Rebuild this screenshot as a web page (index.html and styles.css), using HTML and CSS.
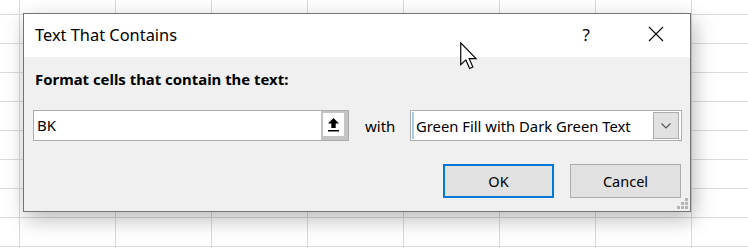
FILE: index.html
```html
<!DOCTYPE html>
<html lang="en">
<head>
  <meta charset="UTF-8">
  <title>Text That Contains</title>
  <link rel="stylesheet" href="styles.css">
</head>
<body>

  <div class="dialog">
    <div class="titlebar">
      <span class="title">Text That Contains</span>
      <span class="help">?</span>
      <svg class="close" width="16" height="16" viewBox="0 0 16 16">
        <path d="M1 1L15 15M15 1L1 15" stroke="#000" stroke-width="1.1" fill="none"/>
      </svg>
    </div>

    <div class="content">
      <div class="label">Format cells that contain the text:</div>

      <div class="row">
        <div class="textbox">
          <span class="value">BK</span>
          <span class="picker">
            <svg width="13" height="15" viewBox="0 0 13 15">
              <path d="M6.5 1L12 6.5H8.7V11H4.3V6.5H1Z" fill="#000"/>
              <rect x="1" y="13" width="11" height="1.5" fill="#000"/>
            </svg>
          </span>
        </div>
        <span class="with">with</span>
        <div class="combo">
          <span class="caret"></span>
          <span class="value">Green Fill with Dark Green Text</span>
          <span class="drop">
            <svg width="12" height="8" viewBox="0 0 12 8">
              <path d="M1.5 1.5L6 6L10.5 1.5" stroke="#555" stroke-width="1.1" fill="none"/>
            </svg>
          </span>
        </div>
      </div>

      <div class="buttons">
        <button type="button" class="btn default">OK</button>
        <button type="button" class="btn">Cancel</button>
      </div>
    </div>

    <svg class="grip" width="12" height="12" viewBox="0 0 12 12">
      <rect x="8" y="0" width="3" height="3" fill="#b4b4b4"/>
      <rect x="4" y="4" width="3" height="3" fill="#b4b4b4"/>
      <rect x="8" y="4" width="3" height="3" fill="#b4b4b4"/>
      <rect x="0" y="8" width="3" height="3" fill="#b4b4b4"/>
      <rect x="4" y="8" width="3" height="3" fill="#b4b4b4"/>
      <rect x="8" y="8" width="3" height="3" fill="#b4b4b4"/>
    </svg>
  </div>

  <svg class="cursor" width="19" height="28" viewBox="0 0 13 19">
    <path d="M0.5 0.5V15.5L4 12.2L6.6 18L8.8 17L6.3 11.3H11Z" fill="#fff" stroke="#000" stroke-width="0.8" stroke-linejoin="miter"/>
  </svg>

</body>
</html>
```

FILE: styles.css
```css
body {
  margin: 0;
  width: 748px;
  height: 248px;
  overflow: hidden;
  position: relative;
  font-family: "Noto Sans", "Open Sans", sans-serif;
  color: #000;
  background-color: #fff;
  background-image:
    linear-gradient(to right, #dadada 1px, transparent 1px),
    linear-gradient(to bottom, #dadada 1px, transparent 1px);
  background-size: 96px 100%, 100% 29px;
  background-position: 19px 0, 0 14px;
}
.dialog {
  position: relative;
  box-sizing: border-box;
  margin: 13px 0 0 23px;
  width: 668px;
  height: 199px;
  border: 1px solid #747474;
  background: #f0f0f0;
  box-shadow: 3px 7px 20px rgba(0, 0, 0, 0.28);
}
.titlebar {
  display: flex;
  align-items: center;
  height: 43px;
  padding-left: 11px;
  background: #fff;
}
.title {
  flex: 1;
  font-size: 16.4px;
  margin-top: -2px;
}
.help {
  font-size: 17px;
  margin-right: 58px;
  margin-top: -2px;
}
.close {
  margin-right: 26px;
  margin-top: -3px;
}
.content {
  padding: 12px 8px 0 9px;
}
.label {
  font-weight: bold;
  font-size: 14.9px;
  line-height: 20px;
  padding-left: 2px;
}
.row {
  display: flex;
  align-items: center;
  margin-top: 21px;
  height: 31px;
}
.textbox {
  box-sizing: border-box;
  display: flex;
  width: 316px;
  height: 31px;
  border: 1px solid #adadad;
  background: #fff;
}
.textbox .value {
  flex: 1;
  font-size: 15px;
  line-height: 29px;
  padding-left: 3px;
}
.picker {
  box-sizing: border-box;
  display: flex;
  align-items: center;
  justify-content: center;
  width: 27px;
  height: 29px;
  background: #fff;
  border: 2px solid #c4c4c4;
  border-right-width: 4px;
  border-bottom-width: 4px;
}
.with {
  font-size: 15px;
  margin-left: 16px;
  width: 45px;
}
.combo {
  box-sizing: border-box;
  display: flex;
  align-items: center;
  width: 272px;
  height: 31px;
  border: 1px solid #adadad;
  background: #fff;
  padding: 1px 2px 1px 1px;
}
.caret {
  width: 2px;
  height: 27px;
  background: #a6cdee;
}
.combo .value {
  flex: 1;
  font-size: 14.8px;
  padding-left: 2px;
}
.drop {
  box-sizing: border-box;
  display: flex;
  align-items: center;
  justify-content: center;
  width: 26px;
  height: 27px;
  background: #e1e1e1;
  border: 1px solid #adadad;
}
.buttons {
  display: flex;
  justify-content: flex-end;
  gap: 16px;
  margin-top: 23px;
  padding-right: 1px;
}
.btn {
  box-sizing: border-box;
  width: 111px;
  height: 34px;
  font-family: inherit;
  font-size: 14.5px;
  color: #000;
  background: #e1e1e1;
  border: 1px solid #adadad;
  padding: 0;
}
.btn.default {
  border: 2px solid #0078d7;
}
.grip {
  position: absolute;
  right: 1px;
  bottom: 1px;
}
.cursor {
  position: absolute;
  left: 460px;
  top: 42px;
}
```
